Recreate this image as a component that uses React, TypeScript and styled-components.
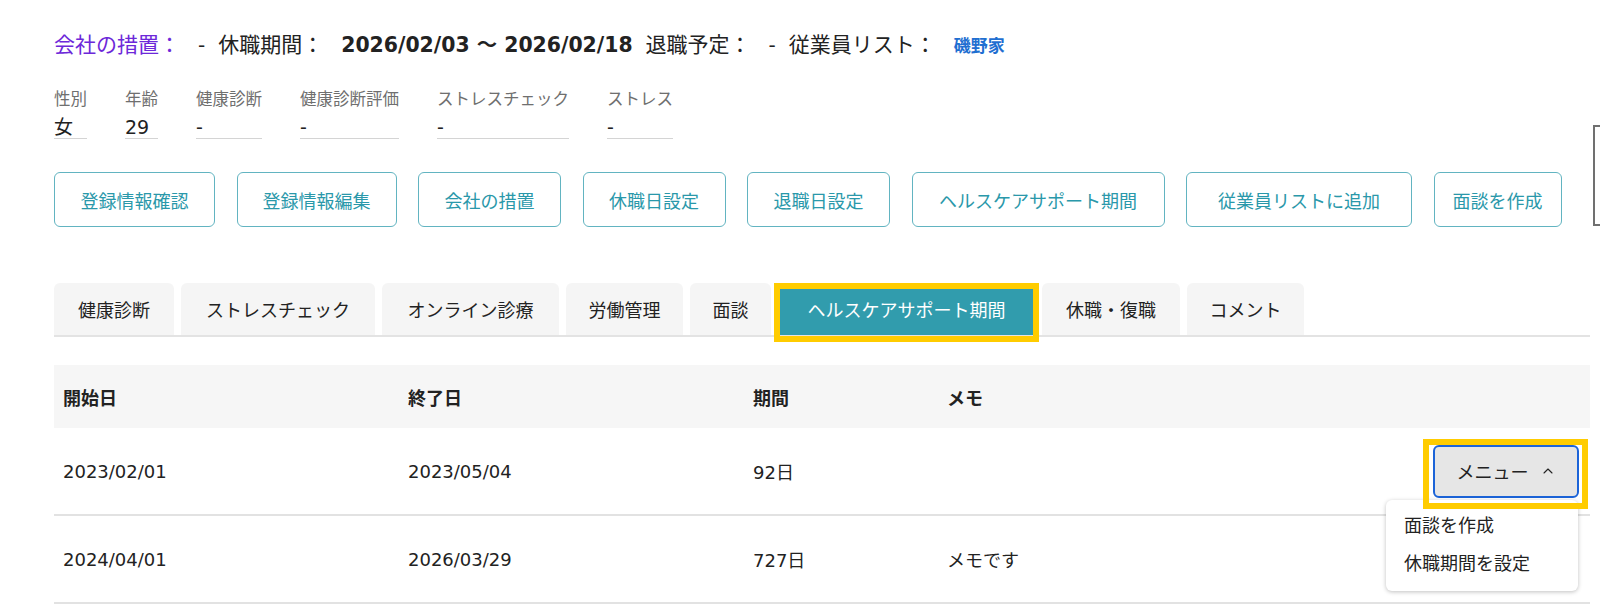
import React from 'react';
import styled, { createGlobalStyle } from 'styled-components';
import { ChevronUp } from 'lucide-react';

const GlobalStyle = createGlobalStyle`
  body {
    margin: 0;
    background: #fff;
    color: #222;
    font-family: "DejaVu Sans", "Noto Sans CJK JP", sans-serif;
    overflow: hidden;
  }
`;

const teal = '#319cad';
const highlight = '#ffcc00';

const Page = styled.div`
  display: flex;
  align-items: flex-start;
`;

const Main = styled.main`
  width: 1536px;
  margin-left: 54px;
  padding-top: 31px;
  flex-shrink: 0;
`;

const SidePanel = styled.aside`
  flex-shrink: 0;
  width: 160px;
  height: 97px;
  margin: 125px 0 0 3px;
  border: 2px solid #707070;
  background: #fff;
`;

const Summary = styled.div`
  display: flex;
  align-items: baseline;
  gap: 13px;
  font-size: 21px;
  line-height: 28px;
`;

const SummaryItem = styled.div`
  display: flex;
  align-items: baseline;
  gap: 18px;
`;

const SummaryLabel = styled.span<{ $accent?: boolean }>`
  color: ${p => (p.$accent ? '#6d28d9' : '#222')};
`;

const SummaryValue = styled.span<{ $strong?: boolean }>`
  font-size: ${p => (p.$strong ? 20.4 : 20)}px;
  font-weight: ${p => (p.$strong ? 700 : 400)};
`;

const LinkText = styled.a`
  color: #1f6fd1;
  font-weight: 700;
  font-size: 17px;
  text-decoration: none;
`;

const Profile = styled.div`
  display: flex;
  gap: 38px;
  margin-top: 29px;
`;

const Field = styled.div`
  display: flex;
  flex-direction: column;
`;

const FieldLabel = styled.span`
  font-size: 16.5px;
  line-height: 22px;
  color: #6f6f6f;
  white-space: nowrap;
`;

const FieldValue = styled.span`
  margin-top: 6px;
  font-size: 19px;
  line-height: 21px;
  border-bottom: 1px solid #d4d4d4;
`;

const Actions = styled.div`
  display: flex;
  gap: 21.5px;
  margin-top: 33px;
`;

const ActionButton = styled.button<{ $w: number }>`
  width: ${p => p.$w}px;
  height: 55px;
  flex-shrink: 0;
  border: 1.5px solid #62b4c1;
  border-radius: 6px;
  background: #fff;
  color: #2a98aa;
  font-family: inherit;
  font-size: 18px;
  padding: 0;
`;

const TabBar = styled.div`
  display: flex;
  gap: 7px;
  margin-top: 56px;
  border-bottom: 2px solid #e3e3e3;
`;

const Tab = styled.div<{ $w: number; $active?: boolean }>`
  position: relative;
  width: ${p => p.$w}px;
  height: 52px;
  flex-shrink: 0;
  display: flex;
  align-items: center;
  justify-content: center;
  border-radius: 6px 6px 0 0;
  font-size: 18px;
  background: ${p => (p.$active ? teal : '#f5f5f5')};
  color: ${p => (p.$active ? '#fff' : '#222')};
`;

const Highlight = styled.span<{ $t: number; $r: number; $b: number; $l: number }>`
  position: absolute;
  top: ${p => p.$t}px;
  right: ${p => p.$r}px;
  bottom: ${p => p.$b}px;
  left: ${p => p.$l}px;
  border: 6px solid ${highlight};
  pointer-events: none;
  z-index: 3;
`;

const Table = styled.div`
  margin-top: 28px;
`;

const Row = styled.div<{ $head?: boolean }>`
  display: grid;
  grid-template-columns: 345px 345px 194px 1fr 200px;
  align-items: center;
  height: ${p => (p.$head ? 63 : 86)}px;
  background: ${p => (p.$head ? '#f6f6f6' : '#fff')};
  border-bottom: ${p => (p.$head ? 'none' : '2px solid #e2e2e2')};
  font-size: 18px;
  font-weight: ${p => (p.$head ? 700 : 400)};
`;

const Cell = styled.div`
  padding-left: 9px;
`;

const ActionCell = styled.div`
  display: flex;
  justify-content: flex-end;
  padding-right: 11px;
`;

const MenuWrap = styled.div`
  position: relative;
`;

const MenuButton = styled.button`
  width: 146px;
  height: 53px;
  display: flex;
  align-items: center;
  justify-content: center;
  gap: 11px;
  border: 2px solid #1c64d8;
  border-radius: 6px;
  background: #e6e6e6;
  color: #222;
  font-family: inherit;
  font-size: 18px;
  padding: 0;
`;

const Dropdown = styled.ul`
  position: absolute;
  top: 55px;
  right: 1px;
  width: 192px;
  margin: 0;
  padding: 5px 0 10px;
  list-style: none;
  background: #fff;
  border-radius: 6px;
  box-shadow: 0 1px 4px rgba(0, 0, 0, 0.25);
  z-index: 2;
`;

const DropdownItem = styled.li`
  height: 38px;
  display: flex;
  align-items: center;
  padding-left: 18px;
  font-size: 18px;
  color: #222;
`;

const profile = [
  { label: '性別', value: '女' },
  { label: '年齢', value: '29' },
  { label: '健康診断', value: '-' },
  { label: '健康診断評価', value: '-' },
  { label: 'ストレスチェック', value: '-' },
  { label: 'ストレス', value: '-' },
];

const actions = [
  { label: '登録情報確認', w: 161 },
  { label: '登録情報編集', w: 160 },
  { label: '会社の措置', w: 143 },
  { label: '休職日設定', w: 143 },
  { label: '退職日設定', w: 143 },
  { label: 'ヘルスケアサポート期間', w: 253 },
  { label: '従業員リストに追加', w: 226 },
  { label: '面談を作成', w: 128 },
];

const tabs = [
  { label: '健康診断', w: 120 },
  { label: 'ストレスチェック', w: 194 },
  { label: 'オンライン診療', w: 177 },
  { label: '労働管理', w: 117 },
  { label: '面談', w: 81 },
  { label: 'ヘルスケアサポート期間', w: 257, active: true },
  { label: '休職・復職', w: 138 },
  { label: 'コメント', w: 117 },
];

const periods = [
  { start: '2023/02/01', end: '2023/05/04', days: '92日', memo: '', open: true },
  { start: '2024/04/01', end: '2026/03/29', days: '727日', memo: 'メモです', open: false },
];

const App: React.FC = () => (
  <Page>
    <GlobalStyle />
    <Main>
      <Summary>
        <SummaryItem>
          <SummaryLabel $accent>会社の措置：</SummaryLabel>
          <SummaryValue>-</SummaryValue>
        </SummaryItem>
        <SummaryItem>
          <SummaryLabel>休職期間：</SummaryLabel>
          <SummaryValue $strong>2026/02/03 〜 2026/02/18</SummaryValue>
        </SummaryItem>
        <SummaryItem>
          <SummaryLabel>退職予定：</SummaryLabel>
          <SummaryValue>-</SummaryValue>
        </SummaryItem>
        <SummaryItem>
          <SummaryLabel>従業員リスト：</SummaryLabel>
          <LinkText href="#">磯野家</LinkText>
        </SummaryItem>
      </Summary>

      <Profile>
        {profile.map(f => (
          <Field key={f.label}>
            <FieldLabel>{f.label}</FieldLabel>
            <FieldValue>{f.value}</FieldValue>
          </Field>
        ))}
      </Profile>

      <Actions>
        {actions.map(a => (
          <ActionButton key={a.label} $w={a.w}>
            {a.label}
          </ActionButton>
        ))}
      </Actions>

      <TabBar>
        {tabs.map(t => (
          <Tab key={t.label} $w={t.w} $active={t.active}>
            {t.label}
            {t.active && <Highlight $t={0} $r={-4} $b={-7} $l={-4} />}
          </Tab>
        ))}
      </TabBar>

      <Table>
        <Row $head>
          <Cell>開始日</Cell>
          <Cell>終了日</Cell>
          <Cell>期間</Cell>
          <Cell>メモ</Cell>
          <Cell />
        </Row>
        {periods.map(p => (
          <Row key={p.start}>
            <Cell>{p.start}</Cell>
            <Cell>{p.end}</Cell>
            <Cell>{p.days}</Cell>
            <Cell>{p.memo}</Cell>
            <ActionCell>
              {p.open && (
                <MenuWrap>
                  <MenuButton>
                    メニュー
                    <ChevronUp size={16} strokeWidth={1.6} />
                  </MenuButton>
                  <Highlight $t={-6} $r={-9} $b={-11} $l={-10} />
                  <Dropdown>
                    <DropdownItem>面談を作成</DropdownItem>
                    <DropdownItem>休職期間を設定</DropdownItem>
                  </Dropdown>
                </MenuWrap>
              )}
            </ActionCell>
          </Row>
        ))}
      </Table>
    </Main>
    <SidePanel />
  </Page>
);

export default App;
